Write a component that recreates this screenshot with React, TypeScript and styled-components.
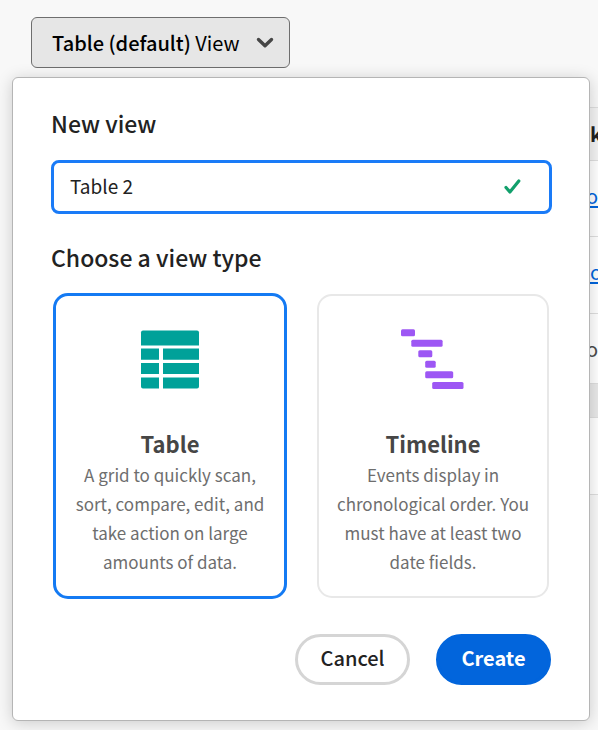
import React, { useState } from "react";
import styled, { createGlobalStyle } from "styled-components";

const GlobalStyle = createGlobalStyle`
  *, *::before, *::after { box-sizing: border-box; }
  html { background: #f8f8f8; overflow: hidden; }
  body {
    margin: 0;
    color: #222222;
    font-family: "Noto Sans CJK SC", "Noto Sans", sans-serif;
  }
  button, input { font: inherit; color: inherit; margin: 0; }
`;

const Page = styled.main`
  position: relative;
  overflow: hidden;
  min-height: 100vh;
`;

const Toolbar = styled.header`
  display: flex;
  padding: 17px 31px 39px;
`;

const ViewPicker = styled.button`
  display: flex;
  align-items: center;
  height: 51px;
  padding: 0 15px 0 20px;
  gap: 16px;
  border: 1px solid #6e6e6e;
  border-radius: 6px;
  background: #e6e6e6;
  color: #000000;
  font-size: 20px;
  line-height: 30px;
  white-space: nowrap;
`;

const ViewName = styled.span`
  font-weight: 500;
`;

const Board = styled.section`
  padding-left: 31px;
`;

const Records = styled.table`
  width: 100%;
  table-layout: fixed;
  border-collapse: collapse;
  font-size: 20px;
  line-height: 28px;
`;

const RecordRow = styled.tr<{ $height: number; $fill: string }>`
  height: ${(p) => p.$height}px;
  background: ${(p) => p.$fill};
  border-top: 1px solid #dedede;
`;

const cellStyle = `
  padding: 0;
  overflow: hidden;
  white-space: nowrap;
  text-align: left;
`;

const HeadCell = styled.th<{ $narrow?: boolean }>`
  ${cellStyle}
  width: ${(p) => (p.$narrow ? "12px" : "auto")};
  padding-left: ${(p) => (p.$narrow ? "4px" : "0")};
  font-weight: 700;
`;

const Cell = styled.td<{ $inset?: boolean }>`
  ${cellStyle}
  padding-left: ${(p) => (p.$inset ? "4px" : "0")};
  color: #4b4b4b;
`;

const LinkCell = styled(Cell)`
  padding-bottom: 6px;
`;

const RecordLink = styled.a`
  color: #0265dc;
  text-decoration: underline;
  text-decoration-thickness: 2px;
  text-underline-offset: 2px;
`;

const Dialog = styled.form`
  position: absolute;
  top: 77px;
  left: 12px;
  right: 8px;
  padding: 30px 37px 35px 38px;
  border: 1px solid #b5b5b5;
  border-radius: 6px;
  background: #ffffff;
  box-shadow: 0 2px 16px rgba(0, 0, 0, 0.18);
`;

const Heading = styled.label`
  display: block;
  font-size: 23px;
  font-weight: 500;
  line-height: 30px;
`;

const NameField = styled.div`
  display: flex;
  align-items: center;
  height: 54px;
  margin: 22px 0 28px;
  padding: 0 28px 0 16px;
  border: 3px solid #1a7bf7;
  border-radius: 8px;
`;

const NameInput = styled.input`
  flex: 1;
  min-width: 0;
  padding: 0 0 2px;
  border: 0;
  outline: 0;
  background: none;
  font-size: 19px;
  line-height: 30px;
`;

const Types = styled.fieldset`
  margin: 0;
  padding: 0;
  border: 0;
  min-width: 0;
`;

const Legend = styled.legend`
  padding: 0;
  font-size: 23px;
  font-weight: 500;
  line-height: 30px;
`;

const Cards = styled.div`
  display: grid;
  grid-template-columns: 1fr 1fr;
  gap: 31px;
  padding: 22px 3px 0;
`;

const Card = styled.label<{ $selected: boolean }>`
  position: relative;
  display: flex;
  flex-direction: column;
  align-items: center;
  margin: ${(p) => (p.$selected ? "-1px" : "0")};
  padding: 29px 14px 20px;
  border: ${(p) => (p.$selected ? "3px solid #147af3" : "2px solid #e8e8e8")};
  border-radius: 15px;
  text-align: center;
`;

const CardRadio = styled.input`
  position: absolute;
  opacity: 0;
`;

const CardIcon = styled.svg`
  display: block;
  width: 68px;
  height: 68px;
`;

const CardTitle = styled.span`
  margin-top: 34px;
  color: #464646;
  font-size: 22px;
  font-weight: 700;
  line-height: 33px;
`;

const CardText = styled.span`
  color: #6e6e6e;
  font-size: 17px;
  line-height: 29px;
`;

const Actions = styled.footer`
  display: flex;
  justify-content: flex-end;
  gap: 26px;
  margin-top: 36px;
  padding: 0 1px;
`;

const Action = styled.button<{ $primary?: boolean }>`
  width: 115px;
  height: 51px;
  padding: 0 0 4px;
  border: 3px solid ${(p) => (p.$primary ? "#0265dc" : "#d5d5d5")};
  border-radius: 26px;
  background: ${(p) => (p.$primary ? "#0265dc" : "#ffffff")};
  color: ${(p) => (p.$primary ? "#ffffff" : "#222222")};
  font-size: 20px;
  font-weight: ${(p) => (p.$primary ? 700 : 500)};
  line-height: 30px;
`;

const ChevronIcon = () => (
  <svg width="18" height="12" viewBox="0 0 18 12" fill="none" aria-hidden="true">
    <path d="M2.5 2.5 9 8.7l6.5-6.2" stroke="#464646" strokeWidth="3.4" strokeLinecap="round" strokeLinejoin="round" />
  </svg>
);

const ValidIcon = () => (
  <svg width="18" height="18" viewBox="0 0 18 18" fill="none" aria-hidden="true">
    <path d="M3 9.5 6.9 14 15.8 3" stroke="#12a06c" strokeWidth="3.2" strokeLinecap="round" strokeLinejoin="round" />
  </svg>
);

const TableIcon = () => (
  <CardIcon viewBox="0 0 68 68" fill="#00a199" aria-hidden="true">
    <path d="M7 5.5h54a2 2 0 0 1 2 2v13H5v-13a2 2 0 0 1 2-2Z" />
    <path d="M5 23.5h18v11.3H5zM27 23.5h36v11.3H27zM5 38h18v11H5zM27 38h36v11H27zM5 52.5h18v11H7a2 2 0 0 1-2-2zM27 52.5h36v9a2 2 0 0 1-2 2H27z" />
  </CardIcon>
);

const bars = [
  { x: 2, y: 4.3, width: 14 },
  { x: 12.3, y: 14.8, width: 31.3 },
  { x: 19.3, y: 25.3, width: 14 },
  { x: 26.2, y: 35.8, width: 10.5 },
  { x: 26.2, y: 46.3, width: 28 },
  { x: 33.2, y: 57, width: 31.3 },
];

const TimelineIcon = () => (
  <CardIcon viewBox="0 0 68 68" fill="#9d57f4" aria-hidden="true">
    {bars.map((bar) => (
      <rect key={bar.y} {...bar} height="7" rx="1.5" />
    ))}
  </CardIcon>
);

const viewTypes = [
  {
    id: "table",
    title: "Table",
    text: "A grid to quickly scan, sort, compare, edit, and take action on large amounts of data.",
    Icon: TableIcon,
  },
  {
    id: "timeline",
    title: "Timeline",
    text: "Events display in chronological order. You must have at least two date fields.",
    Icon: TimelineIcon,
  },
];

export default function App() {
  const [name, setName] = useState("Table 2");
  const [type, setType] = useState("table");

  return (
    <>
      <GlobalStyle />
      <Page>
        <Toolbar>
          <ViewPicker type="button" aria-haspopup="dialog" aria-expanded="true">
            <span>
              <ViewName>Table (default)</ViewName> View
            </span>
            <ChevronIcon />
          </ViewPicker>
        </Toolbar>

        <Board>
          <Records>
            <thead>
              <RecordRow $height={53} $fill="#f3f3f3">
                <HeadCell />
                <HeadCell $narrow>k</HeadCell>
              </RecordRow>
            </thead>
            <tbody>
              <RecordRow $height={76} $fill="#ffffff">
                <Cell />
                <LinkCell><RecordLink href="#first">o</RecordLink></LinkCell>
              </RecordRow>
              <RecordRow $height={77} $fill="#ffffff">
                <Cell />
                <LinkCell $inset><RecordLink href="#second">o</RecordLink></LinkCell>
              </RecordRow>
              <RecordRow $height={70} $fill="#ffffff">
                <Cell />
                <Cell>o</Cell>
              </RecordRow>
              <RecordRow $height={34} $fill="#e8e8e8">
                <Cell />
                <Cell />
              </RecordRow>
              <RecordRow $height={77} $fill="#ffffff">
                <Cell />
                <Cell />
              </RecordRow>
              <RecordRow $height={236} $fill="#f8f8f8">
                <Cell />
                <Cell />
              </RecordRow>
            </tbody>
          </Records>
        </Board>

        <Dialog role="dialog" aria-label="New view" onSubmit={(e) => e.preventDefault()}>
          <Heading htmlFor="view-name">New view</Heading>
          <NameField>
            <NameInput id="view-name" value={name} onChange={(e) => setName(e.target.value)} />
            <ValidIcon />
          </NameField>

          <Types>
            <Legend>Choose a view type</Legend>
            <Cards>
              {viewTypes.map(({ id, title, text, Icon }) => (
                <Card key={id} $selected={type === id}>
                  <CardRadio
                    type="radio"
                    name="view-type"
                    value={id}
                    checked={type === id}
                    onChange={() => setType(id)}
                  />
                  <Icon />
                  <CardTitle>{title}</CardTitle>
                  <CardText>{text}</CardText>
                </Card>
              ))}
            </Cards>
          </Types>

          <Actions>
            <Action type="button">Cancel</Action>
            <Action type="submit" $primary>Create</Action>
          </Actions>
        </Dialog>
      </Page>
    </>
  );
}
